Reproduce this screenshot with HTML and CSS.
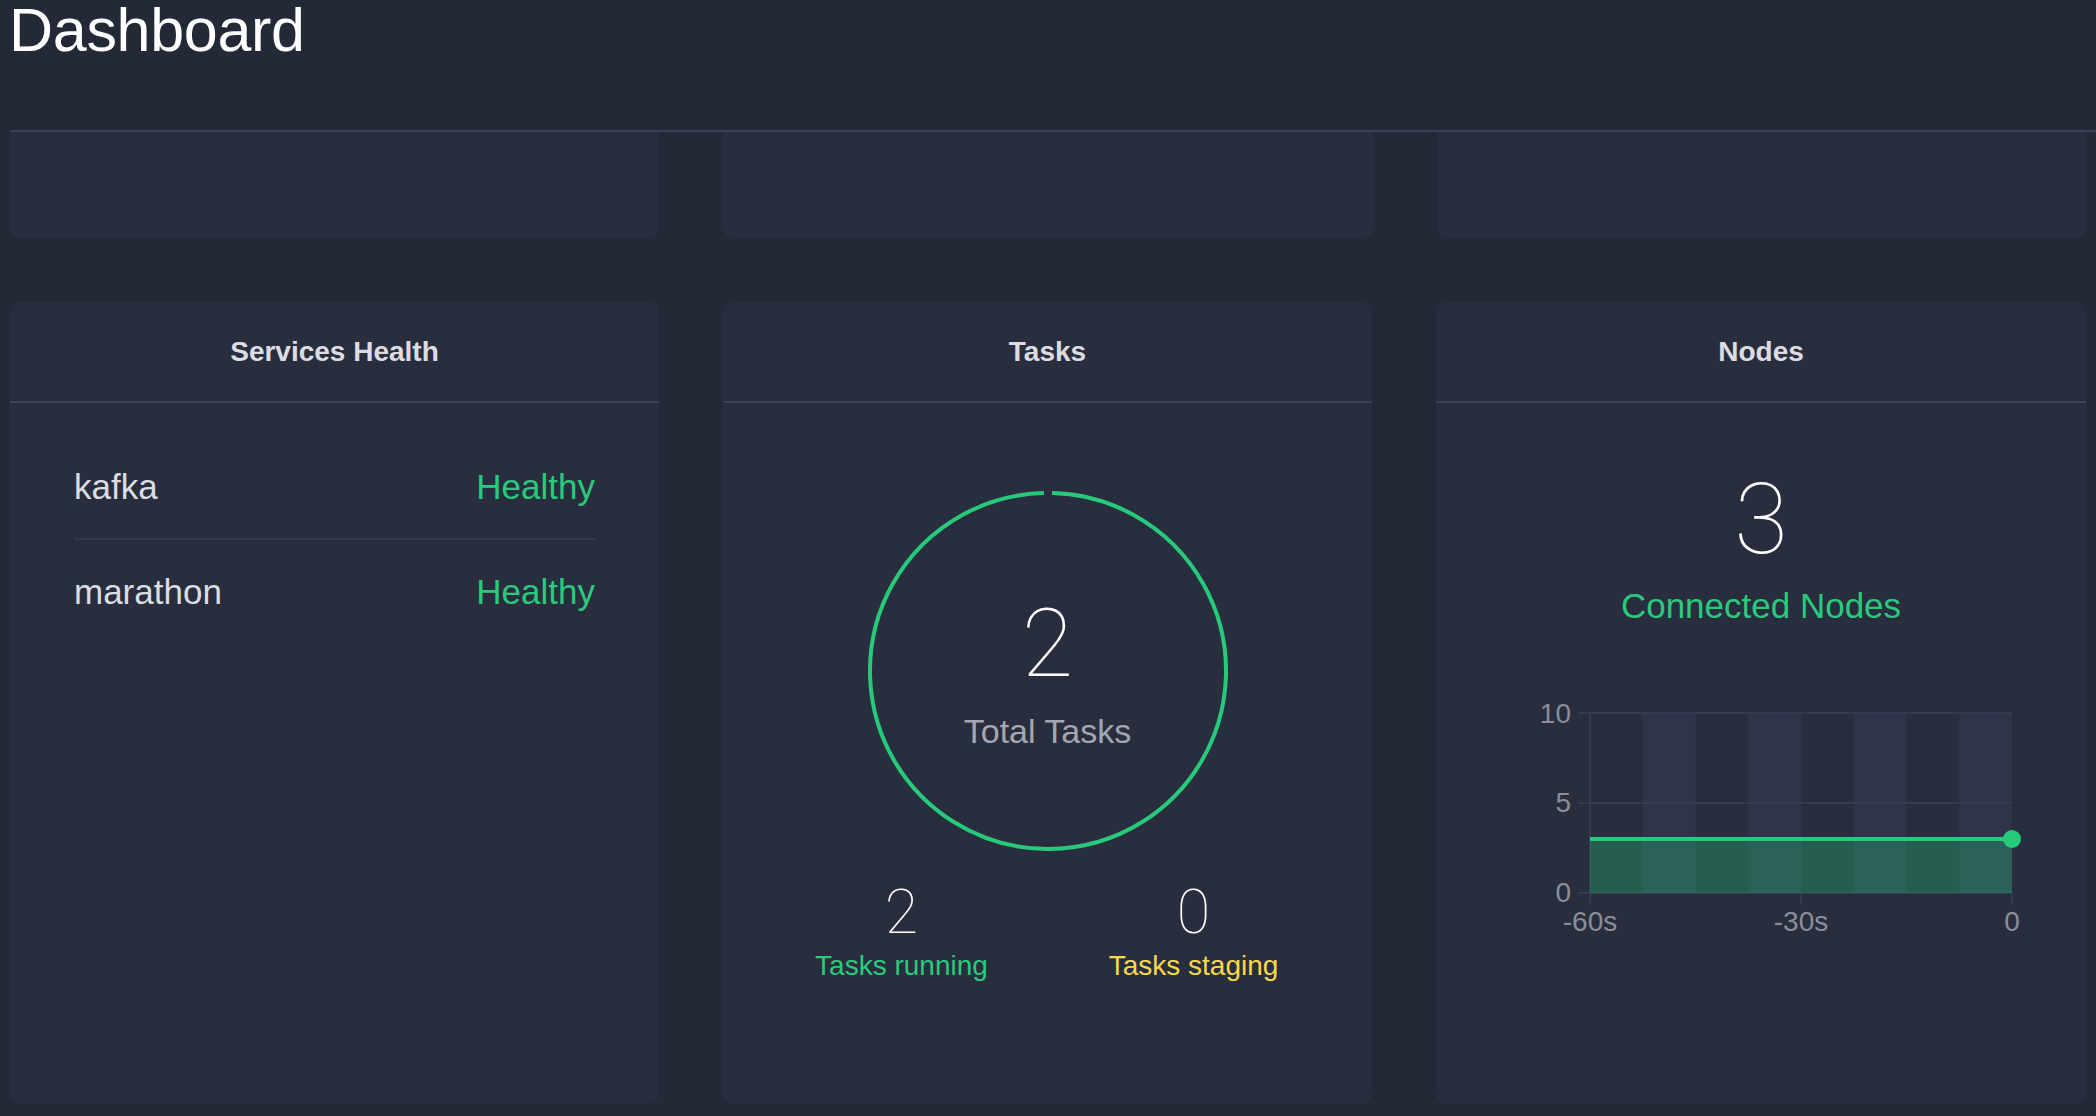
FILE: index.html
```html
<!DOCTYPE html>
<html lang="en">
<head>
<meta charset="utf-8">
<title>Dashboard</title>
<link rel="stylesheet" href="styles.css">
</head>
<body>
<div class="page">
  <header class="page-header">
    <h1 class="page-title">Dashboard</h1>
  </header>

  <div class="grid top-row">
    <div class="card card-top"></div>
    <div class="card card-top"></div>
    <div class="card card-top"></div>
  </div>

  <div class="grid main-row">
    <section class="card panel">
      <div class="panel-head">Services Health</div>
      <ul class="service-list">
        <li class="service"><span class="service-name">kafka</span><span class="status-healthy">Healthy</span></li>
        <li class="service"><span class="service-name">marathon</span><span class="status-healthy">Healthy</span></li>
      </ul>
    </section>

    <section class="card panel">
      <div class="panel-head">Tasks</div>
      <div class="tasks-body">
        <div class="donut">
          <svg class="donut-ring" width="360" height="360" viewBox="0 0 360 360">
            <path d="M184 2.05 A178 178 0 1 1 176 2.05" fill="none" stroke="#27c97b" stroke-width="4"/>
          </svg>
          <div class="donut-value">2</div>
          <div class="donut-label">Total Tasks</div>
        </div>
        <div class="task-stats">
          <div class="stat">
            <div class="stat-value">2</div>
            <div class="stat-label running">Tasks running</div>
          </div>
          <div class="stat">
            <div class="stat-value">0</div>
            <div class="stat-label staging">Tasks staging</div>
          </div>
        </div>
      </div>
    </section>

    <section class="card panel">
      <div class="panel-head">Nodes</div>
      <div class="nodes-body">
        <div class="nodes-value">3</div>
        <div class="nodes-label">Connected Nodes</div>
        <svg class="nodes-chart" width="650" height="250" viewBox="0 0 650 250">
          <g class="stripes">
            <rect x="206.75" y="23" width="52.75" height="180" fill="#2f3448"/>
            <rect x="312.25" y="23" width="52.75" height="180" fill="#2f3448"/>
            <rect x="417.75" y="23" width="52.75" height="180" fill="#2f3448"/>
            <rect x="523.25" y="23" width="52.75" height="180" fill="#2f3448"/>
          </g>
          <g stroke="#394053" stroke-width="1.5">
            <line x1="142" y1="23" x2="576" y2="23"/>
            <line x1="142" y1="113" x2="576" y2="113"/>
            <line x1="142" y1="203" x2="576" y2="203"/>
            <line x1="154" y1="23" x2="154" y2="215"/>
            <line x1="365" y1="203" x2="365" y2="215"/>
            <line x1="576" y1="203" x2="576" y2="215"/>
          </g>
          <rect x="154" y="149" width="422" height="54" fill="#27c97b" fill-opacity="0.3"/>
          <line x1="154" y1="149" x2="576" y2="149" stroke="#27c97b" stroke-width="4"/>
          <circle cx="576" cy="149" r="9" fill="#27c97b"/>
          <g class="axis-text">
            <text x="135" y="33" text-anchor="end">10</text>
            <text x="135" y="122" text-anchor="end">5</text>
            <text x="135" y="212" text-anchor="end">0</text>
            <text x="154" y="241" text-anchor="middle">-60s</text>
            <text x="365" y="241" text-anchor="middle">-30s</text>
            <text x="576" y="241" text-anchor="middle">0</text>
          </g>
        </svg>
      </div>
    </section>
  </div>
</div>
</body>
</html>
```

FILE: styles.css
```css
html, body {
  margin: 0;
  padding: 0;
  background: #232937;
  height: 100%;
  overflow: hidden;
}

body {
  font-family: "Liberation Sans", Arial, Helvetica, sans-serif;
  color: #dcdde2;
}

.page {
  padding-left: 10px;
}

.page-header {
  height: 130px;
  border-bottom: 2px solid #3b4254;
}

.page-title {
  margin: 0 0 0 -1px;
  font-size: 61px;
  line-height: 61px;
  font-weight: normal;
  color: #ffffff;
  letter-spacing: -0.3px;
}

.grid {
  display: grid;
  grid-template-columns: 1fr 1fr 1fr;
  column-gap: 64px;
  margin-right: 10px;
}

.card {
  background: #282e3e;
  border-radius: 10px;
}

.card-top {
  height: 106px;
  border-radius: 0 0 10px 10px;
}

.main-row {
  margin-top: 64px;
}

.panel {
  height: 802px;
}

.panel-head {
  height: 99px;
  line-height: 99px;
  text-align: center;
  font-size: 28px;
  font-weight: bold;
  color: #dcdde2;
  border-bottom: 2px solid #3b4254;
}

/* Services */
.service-list {
  list-style: none;
  margin: 0;
  padding: 32px 64px 0;
}

.service {
  display: flex;
  justify-content: space-between;
  height: 103px;
  line-height: 103px;
  font-size: 35px;
}

.service + .service {
  border-top: 2px solid #333a4b;
}

.service-name {
  color: #dcdde2;
}

.status-healthy {
  color: #2bc97d;
}

/* Tasks */
.tasks-body {
  display: flex;
  flex-direction: column;
  align-items: center;
  padding-top: 88px;
}

.donut {
  position: relative;
  width: 360px;
  height: 360px;
  padding-top: 106px;
  box-sizing: border-box;
  text-align: center;
}

.donut-ring {
  position: absolute;
  left: 0;
  top: 0;
}

.donut-value {
  position: relative;
  font-family: "Roboto", "Liberation Sans", sans-serif;
  font-weight: 100;
  font-size: 94px;
  line-height: 94px;
  color: #ffffff;
}

.donut-label {
  position: relative;
  margin-top: 20px;
  font-size: 34px;
  line-height: 40px;
  color: #a4a7b3;
}

.task-stats {
  display: grid;
  grid-template-columns: 292px 292px;
  margin-top: 31px;
  text-align: center;
}

.stat-value {
  font-family: "Roboto", "Liberation Sans", sans-serif;
  font-weight: 100;
  font-size: 61px;
  line-height: 61px;
  color: #ffffff;
}

.stat-label {
  margin-top: 7px;
  font-size: 28px;
  line-height: 32px;
}

.running {
  color: #2bc97d;
}

.staging {
  color: #f7d84b;
}

/* Nodes */
.nodes-body {
  display: flex;
  flex-direction: column;
  align-items: center;
  padding-top: 69px;
}

.nodes-value {
  font-family: "Roboto", "Liberation Sans", sans-serif;
  font-weight: 100;
  font-size: 98px;
  line-height: 96px;
  color: #ffffff;
}

.nodes-label {
  margin-top: 18px;
  font-size: 35px;
  line-height: 40px;
  color: #2bc97d;
}

.nodes-chart {
  display: block;
  margin-top: 64px;
}

.axis-text {
  font-family: "Liberation Sans", Arial, sans-serif;
  font-size: 28px;
  fill: #8b8e9a;
}
```
